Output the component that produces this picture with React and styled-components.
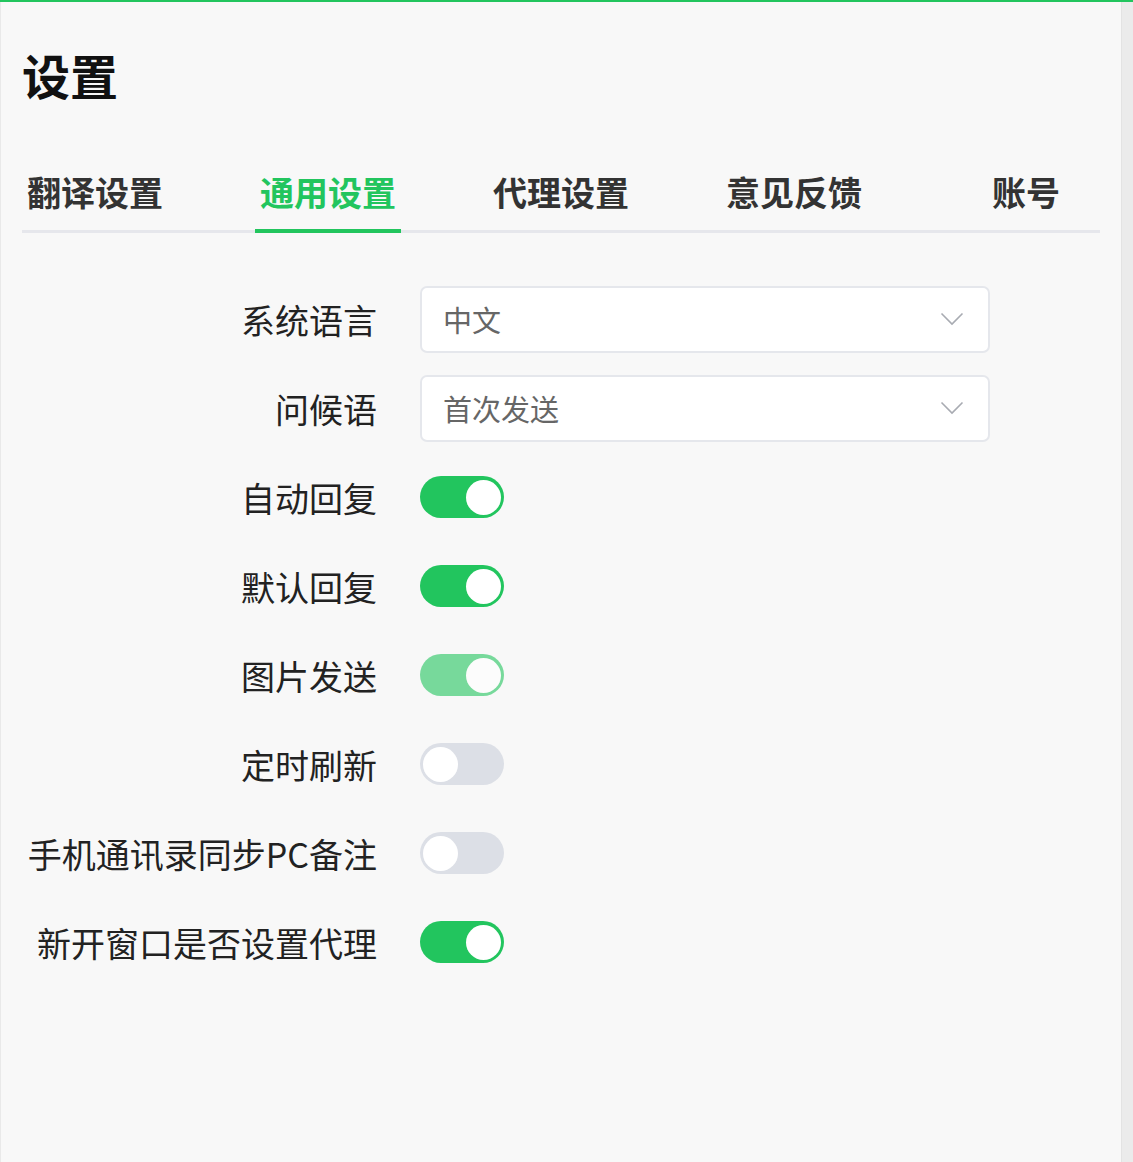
import React from "react";
import styled, { createGlobalStyle } from "styled-components";

const GlobalStyle = createGlobalStyle`
  html, body { margin: 0; padding: 0; background: #f8f8f8; }
  body { font-family: "Noto Sans CJK SC", "Noto Sans", sans-serif; }
  * { box-sizing: border-box; }
`;

const Frame = styled.div`
  display: flex;
  width: 1133px;
  height: 1162px;
  border-top: 2px solid #22c55e;
  background: #f8f8f8;
`;

const Main = styled.main`
  flex: 1;
  border-left: 1px solid #e9e9e9;
  padding: 0 21px 0 21px;
  display: flex;
  flex-direction: column;
`;

const Gutter = styled.div`
  width: 12px;
  background: #ebebeb;
  border-left: 1px solid #e3e3e3;
`;

const Title = styled.h1`
  margin: 43px 0 0 0;
  font-size: 48px;
  line-height: 58px;
  font-weight: 700;
  color: #111;
`;

const Tabs = styled.nav`
  margin-top: 69px;
  display: flex;
  border-bottom: 3px solid #e6e7ec;
  width: 1078px;
`;

const Tab = styled.div`
  padding: 0 5px 17px;
  margin-right: ${(p) => p.$gap}px;
  margin-left: ${(p) => (p.$last ? "auto" : "0")};
  font-size: 34px;
  line-height: 40px;
  font-weight: 700;
  color: ${(p) => (p.$active ? "#22c55e" : "#333")};
  margin-bottom: -3px;
  border-bottom: 4px solid ${(p) => (p.$active ? "#22c55e" : "transparent")};
`;

const Form = styled.div`
  margin-top: 53px;
  display: flex;
  flex-direction: column;
  gap: 23px;
`;

const Row = styled.div`
  display: flex;
  align-items: center;
  height: 66px;
`;

const Label = styled.label`
  width: 355px;
  text-align: right;
  font-size: 34px;
  color: #222;
  margin-right: 43px;
  white-space: nowrap;
`;

const Select = styled.div`
  width: 570px;
  height: 67px;
  background: #fff;
  border: 2px solid #e5e7ec;
  border-radius: 7px;
  display: flex;
  align-items: center;
  justify-content: space-between;
  padding: 0 24px 0 21px;
  font-size: 29px;
  color: #666;
`;

const Track = styled.div`
  width: 84px;
  height: 42px;
  border-radius: 21px;
  background: ${(p) => (p.$on ? "#22c55e" : "#dcdfe6")};
  opacity: ${(p) => (p.$disabled ? 0.6 : 1)};
  display: flex;
  align-items: center;
  justify-content: ${(p) => (p.$on ? "flex-end" : "flex-start")};
  padding: 0 3px;
`;

const Knob = styled.div`
  width: 35px;
  height: 35px;
  border-radius: 50%;
  background: #fff;
`;

const Chevron = () => (
  <svg width="24" height="14" viewBox="0 0 24 14" fill="none">
    <path d="M1.5 1.5 L12 12 L22.5 1.5" stroke="#a8abb2" strokeWidth="1.6" />
  </svg>
);

const Switch = ({ on, disabled }) => (
  <Track $on={on} $disabled={disabled}>
    <Knob />
  </Track>
);

const tabs = [
  { label: "翻译设置", gap: 87 },
  { label: "通用设置", gap: 87, active: true },
  { label: "代理设置", gap: 87 },
  { label: "意见反馈", gap: 0 },
  { label: "账号", gap: 35, last: true },
];

const switches = [
  { label: "自动回复", on: true },
  { label: "默认回复", on: true },
  { label: "图片发送", on: true, disabled: true },
  { label: "定时刷新", on: false },
  { label: "手机通讯录同步PC备注", on: false },
  { label: "新开窗口是否设置代理", on: true },
];

export default function App() {
  return (
    <>
      <GlobalStyle />
      <Frame>
        <Main>
          <Title>设置</Title>
          <Tabs>
            {tabs.map((t) => (
              <Tab key={t.label} $active={t.active} $gap={t.gap} $last={t.last}>
                {t.label}
              </Tab>
            ))}
          </Tabs>
          <Form>
            <Row>
              <Label>系统语言</Label>
              <Select>
                <span>中文</span>
                <Chevron />
              </Select>
            </Row>
            <Row>
              <Label>问候语</Label>
              <Select>
                <span>首次发送</span>
                <Chevron />
              </Select>
            </Row>
            {switches.map((s) => (
              <Row key={s.label}>
                <Label>{s.label}</Label>
                <Switch on={s.on} disabled={s.disabled} />
              </Row>
            ))}
          </Form>
        </Main>
        <Gutter />
      </Frame>
    </>
  );
}
